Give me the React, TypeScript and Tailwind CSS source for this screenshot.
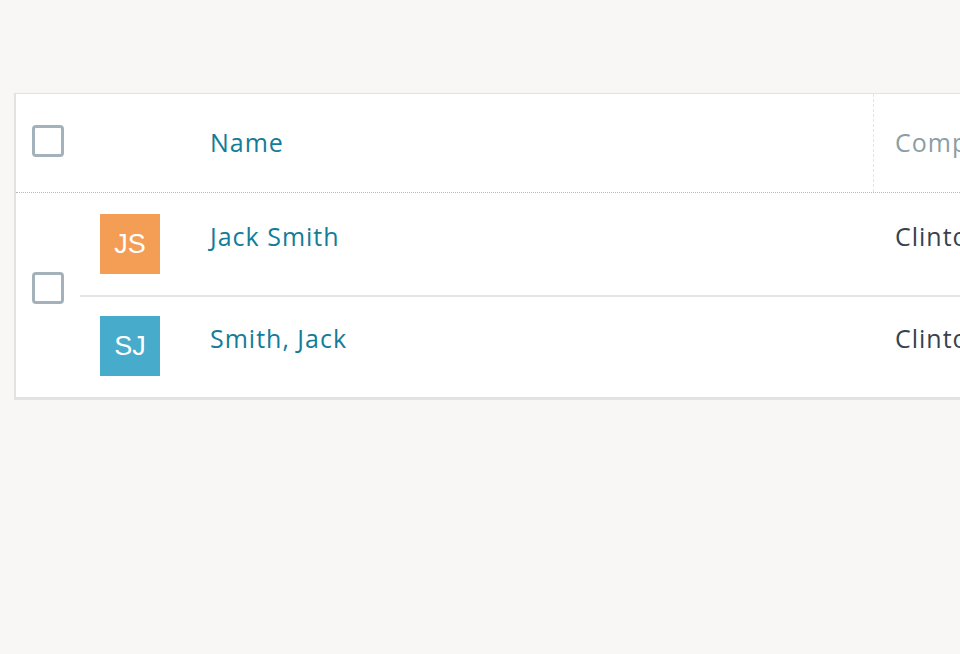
import React from "react";

type Person = {
  initials: string;
  name: string;
  company: string;
  color: string;
};

const people: Person[] = [
  { initials: "JS", name: "Jack Smith", company: "Clinton", color: "bg-[#f49d54]" },
  { initials: "SJ", name: "Smith, Jack", company: "Clinton", color: "bg-[#47abcb]" },
];

function Checkbox() {
  return (
    <div className="w-[32px] h-[32px] rounded-[4px] border-[3px] border-[#a3b2ba] bg-white" />
  );
}

export default function App() {
  return (
    <div
      className="w-[960px] h-[654px] overflow-hidden bg-[#f8f7f5] pt-[93px] pl-[14px]"
      style={{ fontFamily: "'Open Sans', Lato, sans-serif" }}
    >
      <div className="w-[1200px] bg-white border-l-2 border-t border-b-[3px] border-[#e2e2e2]">
        {/* header */}
        <div className="flex h-[99px] border-b border-dotted border-[#b8b8b8]">
          <div className="w-[64px] flex items-center pl-[16px] pb-[4px]">
            <Checkbox />
          </div>
          <div className="w-[110px]" />
          <div className="w-[683px] flex items-center pl-[20px] text-[25px] tracking-[1px] text-[#137c98]">
            Name
          </div>
          <div className="flex-1 flex items-center pl-[21px] border-l border-dashed border-[#e4e4e4] text-[25px] tracking-[1px] text-[#8a9ea6]">
            Company
          </div>
        </div>

        {/* body */}
        <div className="flex">
          <div className="w-[64px] pl-[16px] pt-[79px]">
            <Checkbox />
          </div>
          <div className="flex-1 flex flex-col">
            {people.map((p, i) => (
              <div
                key={p.name}
                className={`flex h-[102px] ${i > 0 ? "border-t-2 border-[#e4e4e4]" : ""}`}
              >
                <div className={`w-[110px] pl-[20px] ${i > 0 ? "pt-[19px]" : "pt-[21px]"}`}>
                  <div
                    className={`w-[60px] h-[60px] ${p.color} flex items-center justify-center text-white text-[27px]`}
                    style={{ fontFamily: "'Liberation Sans', Arial, sans-serif" }}
                  >
                    {p.initials}
                  </div>
                </div>
                <div
                  className={`w-[683px] pl-[20px] ${i > 0 ? "pt-[25px]" : "pt-[27px]"} text-[25px] tracking-[1px] leading-[32px] text-[#137c98]`}
                >
                  {p.name}
                </div>
                <div
                  className={`flex-1 pl-[22px] ${i > 0 ? "pt-[25px]" : "pt-[27px]"} text-[25px] tracking-[1px] leading-[32px] text-[#36424d]`}
                >
                  {p.company}
                </div>
              </div>
            ))}
          </div>
        </div>
      </div>
    </div>
  );
}
